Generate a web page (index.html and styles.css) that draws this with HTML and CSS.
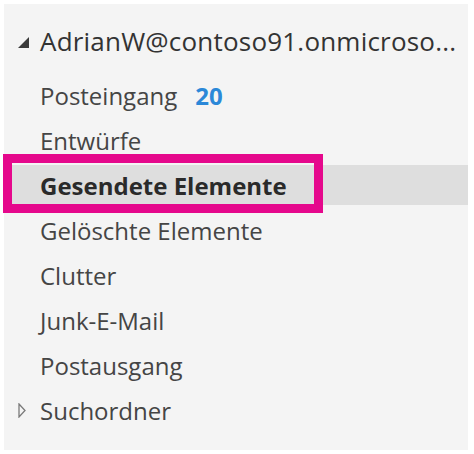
FILE: index.html
```html
<!DOCTYPE html>
<html lang="de">
<head>
  <meta charset="UTF-8" />
  <meta name="viewport" content="width=device-width, initial-scale=1.0"/>
  <title>Ordnerbereich</title>
  <link rel="stylesheet" href="styles.css">
</head>
<body>
  <div class="panel">
    <div class="account">
      <svg class="twisty" width="11" height="11" viewBox="0 0 11 11">
        <polygon points="11,0 11,11 0,11" fill="#3a3a3a"/>
      </svg>
      <span class="account-name">AdrianW@contoso91.onmicroso...</span>
    </div>

    <ul class="folders">
      <li class="folder">Posteingang <span class="count">20</span></li>
      <li class="folder">Entwürfe</li>
      <li class="folder selected">
        Gesendete Elemente
        <!-- Markierung -->
        <div class="mark"></div>
      </li>
      <li class="folder">Gelöschte Elemente</li>
      <li class="folder">Clutter</li>
      <li class="folder">Junk-E-Mail</li>
      <li class="folder">Postausgang</li>
      <li class="folder">
        <svg class="twisty-closed" width="8" height="15" viewBox="0 0 8 15">
          <polygon points="1,1 7,7.5 1,14" fill="none" stroke="#7a7a7a" stroke-width="1.3"/>
        </svg>
        Suchordner
      </li>
    </ul>
  </div>
</body>
</html>
```

FILE: styles.css
```css
* {
  box-sizing: border-box;
}

body {
  margin: 0;
  padding: 4px 6px 4px 4px;
  background: #ffffff;
  font-family: 'Open Sans', 'Noto Sans', sans-serif;
  color: #444;
}

.panel {
  background: #f4f4f4;
  height: 446px;
  padding-top: 14px;
}

.account {
  height: 46px;
  display: flex;
  align-items: center;
  padding-left: 14px;
  margin-bottom: 9px;
}

.twisty {
  margin-right: 11px;
  margin-top: 2px;
}

.account-name {
  font-size: 26px;
  letter-spacing: 0.2px;
  color: #333;
  white-space: nowrap;
}

.folders {
  list-style: none;
  margin: 0;
  padding: 0;
}

.folder {
  position: relative;
  height: 45px;
  display: flex;
  align-items: center;
  padding-left: 36px;
  font-size: 24px;
  color: #454545;
}

.count {
  color: #2b88d8;
  font-weight: bold;
  margin-left: 18px;
}

.selected {
  font-weight: bold;
  color: #2a2a2a;
  background: linear-gradient(#dedede, #dedede) no-repeat 8px 2px / calc(100% - 6px) 40px;
}

.mark {
  position: absolute;
  left: -1px;
  top: -9px;
  width: 320px;
  height: 59px;
  border: 9px solid #e5088c;
}

.twisty-closed {
  position: absolute;
  left: 14px;
  top: 15px;
}
```
